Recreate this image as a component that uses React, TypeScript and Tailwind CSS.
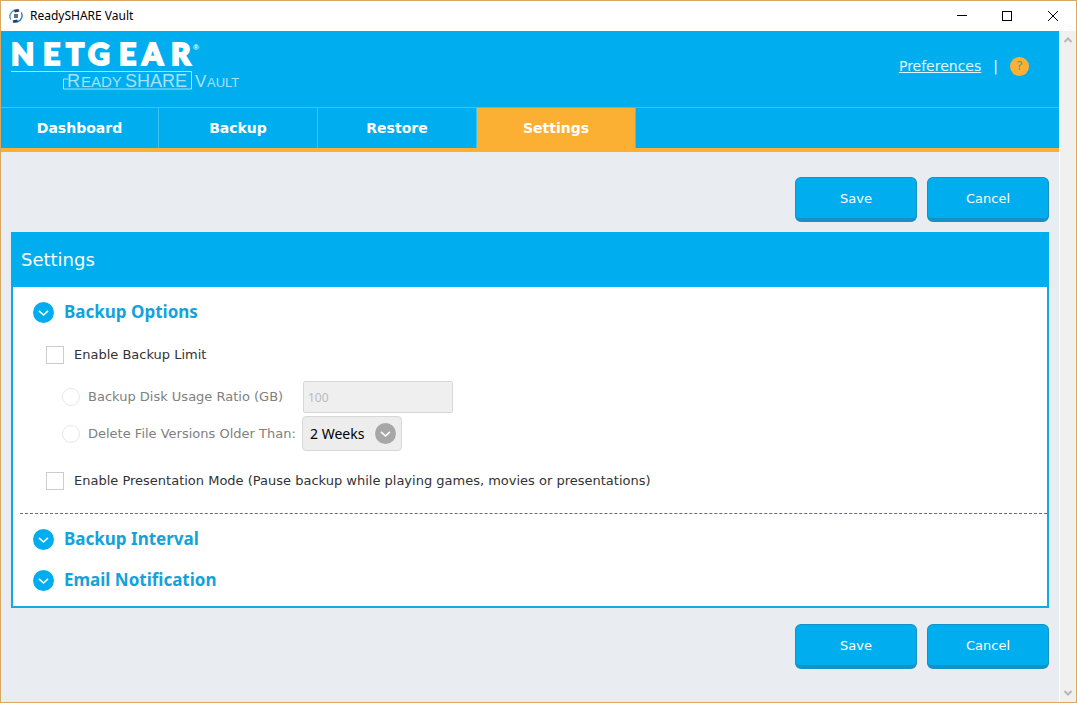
import { useState } from 'react';

const tabs = ['Dashboard', 'Backup', 'Restore', 'Settings'];

function ChevronBadge({ className }: { className: string }) {
  return (
    <svg viewBox="0 0 21 21" className={className} aria-hidden="true">
      <circle cx="10.5" cy="10.5" r="10.5" fill="currentColor" />
      <path d="M6 8.8l4.5 4.2L15 8.8" fill="none" stroke="#fff" strokeWidth="1.6" />
    </svg>
  );
}

function AppIcon() {
  return (
    <svg viewBox="0 0 14 14" className="h-3.5 w-3.5" aria-hidden="true">
      <path d="M1.8 10.500A6 6 0 0 1 5 1.700" fill="none" stroke="#4b9cc4" strokeWidth="1.4" />
      <path d="M4.500.8L9.500 0l1 2.500L6 3.500z" fill="#1d3f73" />
      <path d="M12.200 3.500A6 6 0 0 1 9 12.300" fill="none" stroke="#2d7fae" strokeWidth="1.4" />
      <path d="M9.500 13.200L4.500 14l-1-2.500L8 10.500z" fill="#1d3f73" />
      <path d="M5 5h4v4H5z" fill="#6a6f74" />
    </svg>
  );
}

function TitleBar() {
  return (
    <div className="flex h-[30px] items-center bg-white pl-2 text-black">
      <AppIcon />
      <span className="ml-[7px] grow font-['Noto_Sans',sans-serif] text-xs">ReadySHARE Vault</span>
      <button type="button" aria-label="Minimize" className="flex h-full w-[45px] items-center justify-center">
        <svg viewBox="0 0 10 10" className="h-2.5 w-2.5" stroke="currentColor" shapeRendering="crispEdges">
          <path d="M0 4.500h10" />
        </svg>
      </button>
      <button type="button" aria-label="Maximize" className="flex h-full w-[45px] items-center justify-center">
        <svg viewBox="0 0 10 10" className="h-2.5 w-2.5" fill="none" stroke="currentColor" shapeRendering="crispEdges">
          <path d="M.5.5h9v9h-9z" />
        </svg>
      </button>
      <button type="button" aria-label="Close" className="flex h-full w-[47px] items-center justify-center">
        <svg viewBox="0 0 10 10" className="h-2.5 w-2.5" stroke="currentColor">
          <path d="M0 0l10 10M10 0L0 10" />
        </svg>
      </button>
    </div>
  );
}

function Logo() {
  return (
    <svg viewBox="0 0 232 52" className="h-[52px] w-[232px] overflow-visible" role="img" aria-label="NETGEAR ReadySHARE Vault">
      <g fill="#fff" fontFamily="Lato, sans-serif" fontWeight="900" fontSize="30" stroke="#fff" strokeWidth="2">
        <text x="0" y="26">N</text>
        <text x="32" y="26">E</text>
        <text x="55" y="26">T</text>
        <text x="77" y="26">G</text>
        <text x="108" y="26">E</text>
        <text x="131" y="26">A</text>
        <text x="160" y="26">R</text>
      </g>
      <text x="182" y="11" fill="#fff" fontFamily="Liberation Sans, sans-serif" fontWeight="700" fontSize="8">®</text>
      <path d="M0 32.500h180.500v17.500h-128v-10h5" fill="none" stroke="#a5e2fa" />
      <g fill="#a5e2fa" fontFamily="Liberation Sans, sans-serif">
        <text x="56" y="48" fontSize="18">R</text>
        <text x="70" y="48" fontSize="15">EADY</text>
        <text x="114" y="48" fontSize="18">SHARE</text>
        <text x="184" y="48" fontSize="17">V</text>
        <text x="196" y="48" fontSize="13">AULT</text>
      </g>
    </svg>
  );
}

function Actions() {
  return (
    <div className="flex justify-end gap-2.5">
      {['Save', 'Cancel'].map((label) => (
        <button
          key={label}
          type="button"
          className="h-[45px] w-[122px] rounded-md border border-b-4 border-[#1491c5] bg-[#00aeef] pt-0.5 text-[13px] text-white"
        >
          {label}
        </button>
      ))}
    </div>
  );
}

function SectionTitle({ title }: { title: string }) {
  return (
    <h2>
      <button
        type="button"
        className="flex items-center gap-2.5 font-['Noto_Sans',sans-serif] text-[17px] leading-6 font-bold text-[#14a2db]"
      >
        <ChevronBadge className="h-[21px] w-[21px] text-[#00aeef]" />
        {title}
      </button>
    </h2>
  );
}

function CheckOption({ label }: { label: string }) {
  const [checked, setChecked] = useState(false);
  return (
    <label className="flex w-fit items-center gap-2.5 leading-5 text-[#333]">
      <input
        type="checkbox"
        checked={checked}
        onChange={(e) => setChecked(e.target.checked)}
        className="h-[18px] w-[18px] shrink-0 appearance-none border border-[#ccc] bg-white checked:bg-[#00aeef]"
      />
      {label}
    </label>
  );
}

function RadioOption({ id, label }: { id: string; label: string }) {
  return (
    <div className="flex w-[240px] items-center gap-2">
      <input
        id={id}
        type="radio"
        name="limit"
        disabled
        className="h-[18px] w-[18px] shrink-0 appearance-none rounded-full border border-[#e8e8e8] bg-white"
      />
      <label htmlFor={id} className="whitespace-nowrap text-[#808080]">{label}</label>
    </div>
  );
}

export default function App() {
  const [active, setActive] = useState('Settings');

  return (
    <div className="flex min-h-screen flex-col border border-[#d9a862] bg-[#e9ecf1] font-['DejaVu_Sans',Verdana,sans-serif]">
      <TitleBar />
      <div className="flex grow">
        <div className="min-w-0 grow">
          {/* Header */}
          <header className="bg-[#00aeef]">
            <div className="flex h-[76px] justify-between pt-2 pr-[30px] pl-2.5">
              <Logo />
              <div className="flex h-[54px] items-center gap-3 text-sm text-[#e0f6ff]">
                <a href="#preferences" className="underline">Preferences</a>
                <span>|</span>
                <button
                  type="button"
                  aria-label="Help"
                  className="flex h-[19px] w-[19px] items-center justify-center rounded-full bg-[#fbb034] text-[13px] text-[#4f9f86]"
                >
                  ?
                </button>
              </div>
            </div>
            <nav className="flex h-[45px] border-t border-b-4 border-t-[#3fc3f4] border-b-[#fbb034]">
              {tabs.map((tab) => (
                <button
                  key={tab}
                  type="button"
                  onClick={() => setActive(tab)}
                  className={`w-[159px] border-r border-[#3fc3f4] text-sm font-bold text-white first:w-[158px] ${
                    tab === active ? 'bg-[#fbb034]' : ''
                  }`}
                >
                  {tab}
                </button>
              ))}
            </nav>
          </header>

          <main className="px-2.5 py-[25px]">
            <Actions />

            {/* Settings panel */}
            <section className="mt-2.5 mb-4 border-2 border-[#14a9e3] bg-white">
              <h1 className="-m-0.5 mb-0 flex h-[55px] items-center bg-[#00aeef] px-2.5 text-lg text-white">Settings</h1>
              <div className="px-5 pt-[13px]">
                <SectionTitle title="Backup Options" />
                <div className="mt-[21px] px-[13px] text-[13px]">
                  <CheckOption label="Enable Backup Limit" />
                  <div className="mt-4 mb-5 flex flex-col gap-[3px] pl-4">
                    <div className="flex items-center">
                      <RadioOption id="ratio" label="Backup Disk Usage Ratio (GB)" />
                      <input
                        type="text"
                        aria-label="Backup disk usage ratio in GB"
                        defaultValue="100"
                        disabled
                        className="ml-px h-8 w-[150px] rounded-xs border border-[#d8d8d8] bg-[#efeff0] px-1 font-['Noto_Sans',sans-serif] text-xs text-[#bbb]"
                      />
                    </div>
                    <div className="flex items-center">
                      <RadioOption id="versions" label="Delete File Versions Older Than:" />
                      <div className="relative">
                        <select
                          aria-label="Delete file versions older than"
                          disabled
                          className="h-[35px] w-[100px] appearance-none rounded-sm border border-[#d8d8d8] bg-[#ededee] px-[7px] font-['Noto_Sans',sans-serif] text-sm text-black opacity-100"
                        >
                          <option>2 Weeks</option>
                        </select>
                        <ChevronBadge className="pointer-events-none absolute top-[7px] right-1.5 h-[21px] w-[21px] text-[#a7a7a7]" />
                      </div>
                    </div>
                  </div>
                  <CheckOption label="Enable Presentation Mode (Pause backup while playing games, movies or presentations)" />
                </div>
              </div>
              <div className="mt-[22px] ml-[7px] border-t border-dashed border-[#6c6788]" />
              <div className="flex flex-col gap-[17px] px-5 pt-[13px] pb-3.5">
                <SectionTitle title="Backup Interval" />
                <SectionTitle title="Email Notification" />
              </div>
            </section>

            <Actions />
          </main>
        </div>

        {/* Scrollbar */}
        <div className="flex w-[17px] shrink-0 flex-col items-center justify-between border-l border-white bg-[#f0f0f0] py-1.5 text-[#b8b8b8]">
          <svg viewBox="0 0 8 6" className="h-1.5 w-2" fill="none" stroke="currentColor" strokeWidth="2">
            <path d="M.5 5L4 1.500 7.500 5" />
          </svg>
          <svg viewBox="0 0 8 6" className="h-1.5 w-2" fill="none" stroke="currentColor" strokeWidth="2">
            <path d="M.5 1L4 4.500 7.500 1" />
          </svg>
        </div>
      </div>
    </div>
  );
}
